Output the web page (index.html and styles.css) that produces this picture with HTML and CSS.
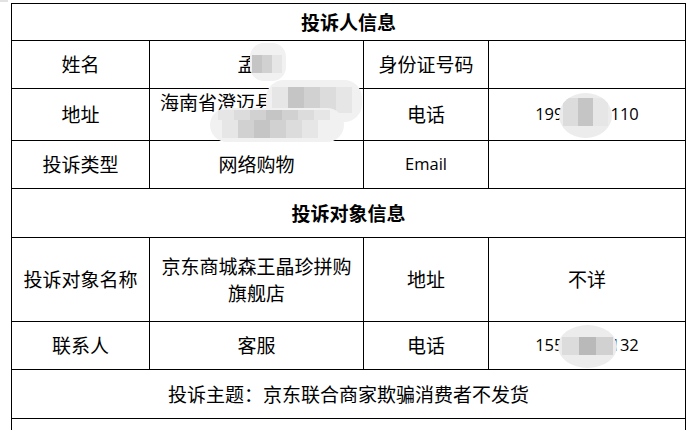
FILE: index.html
```html
<!DOCTYPE html>
<html lang="zh-CN">
<head>
<meta charset="utf-8">
<title>投诉信息</title>
<link rel="stylesheet" href="styles.css">
</head>
<body>
<div class="sheet">
  <table class="form">
    <colgroup>
      <col class="c1"><col class="c2"><col class="c3"><col class="c4">
    </colgroup>
    <tr class="r-title"><th colspan="4">投诉人信息</th></tr>
    <tr class="r48"><td>姓名</td><td>孟<span class="gap-char"></span></td><td>身份证号码</td><td></td></tr>
    <tr class="r-addr"><td>地址</td><td class="addr">海南省澄迈县</td><td>电话</td><td class="num">199<span class="gap"></span>110</td></tr>
    <tr class="r48"><td>投诉类型</td><td>网络购物</td><td class="latin">Email</td><td></td></tr>
    <tr class="r-title2"><th colspan="4">投诉对象信息</th></tr>
    <tr class="r-obj"><td>投诉对象名称</td><td class="two">京东商城森王晶珍拼购旗舰店</td><td>地址</td><td>不详</td></tr>
    <tr class="r48"><td>联系人</td><td>客服</td><td>电话</td><td class="num">155<span class="gap"></span>132</td></tr>
    <tr class="r-theme"><td colspan="4" class="theme">投诉主题：京东联合商家欺骗消费者不发货</td></tr>
    <tr class="r-last"><td colspan="4"></td></tr>
  </table>

  <div class="mosaic m-name">
    <div class="tiles"><i class="t2"></i><i class="t3"></i><i class="t5"></i></div>
  </div>
  <div class="mosaic m-addr-top">
    <div class="row row-a"><i class="t5"></i><i class="t2"></i><i class="t3"></i><i class="t4"></i><i class="t5"></i></div>
  </div>
  <div class="mosaic m-addr-low">
    <div class="row row-b"><i class="t5"></i><i class="t4"></i><i class="t3"></i><i class="t2"></i><i class="t3"></i><i class="t4"></i><i class="t5"></i></div>
    <div class="row row-c"><i class="t5"></i><i class="t3"></i><i class="t2"></i><i class="t3"></i><i class="t4"></i><i class="t5"></i></div>
  </div>
  <div class="mosaic m-tel1">
    <div class="tiles"><i class="t4"></i><i class="t2"></i><i class="t5"></i></div>
  </div>
  <div class="mosaic m-tel2">
    <div class="tiles"><i class="t4"></i><i class="t1"></i><i class="t3"></i></div>
  </div>
  <div class="corner"></div>
</div>
</body>
</html>
```

FILE: styles.css
```css
html, body {
  margin: 0;
  padding: 0;
  background: #ffffff;
}

.sheet {
  position: relative;
  width: 700px;
  height: 430px;
  overflow: hidden;
  padding: 3px 0 0 11px;
  box-sizing: border-box;
}

.form {
  border-collapse: collapse;
  table-layout: fixed;
  width: 674px;
  font-family: "Noto Sans CJK SC", "Microsoft YaHei", sans-serif;
  font-size: 19px;
  color: #000;
}

.form .c1 { width: 138px; }
.form .c2 { width: 214px; }
.form .c3 { width: 125px; }
.form .c4 { width: 197px; }

.form th,
.form td {
  border: 1px solid #000;
  padding: 0 8px 2px;
  text-align: center;
  vertical-align: middle;
  line-height: 27px;
  font-weight: normal;
}

.form th {
  font-weight: bold;
}

.r-title { height: 37px; }
.r48 { height: 48px; }
.r-addr { height: 52px; }
.r-title2 { height: 49px; }
.r-obj { height: 84px; }
.r-theme { height: 49px; }
.r-last { height: 40px; }

.gap-char {
  display: inline-block;
  width: 1em;
}

.form td.addr {
  text-align: left;
  vertical-align: top;
  padding: 0 0 0 10px;
  line-height: 25px;
}

.form td.num,
.form td.latin {
  font-family: "Open Sans", "Noto Sans", sans-serif;
  font-size: 16.5px;
}

.gap {
  display: inline-block;
  width: 47px;
}

/* blurred privacy masks laid over the table */
.mosaic {
  position: absolute;
  background: #f1f1f1;
  filter: blur(0.6px);
  overflow: hidden;
}

.mosaic i {
  display: block;
  height: 100%;
}

.t1 { background: #b9b9b9; }
.t2 { background: #c6c5c5; }
.t3 { background: #d1d1d2; }
.t4 { background: #dcdcdc; }
.t5 { background: #e6e6e7; }

.row {
  display: flex;
  height: 15px;
}
.row i { width: 16px; }

.m-name {
  left: 250px;
  top: 43px;
  width: 36px;
  height: 38px;
  border-radius: 14px;
}
.m-name .tiles {
  display: flex;
  margin: 12px 0 0 2px;
  height: 18px;
}
.m-name .tiles i { width: 10px; }

.m-addr-top {
  left: 266px;
  top: 80px;
  width: 96px;
  height: 42px;
  border-radius: 18px;
}
.row-a { margin: 7px 0 0 6px; height: 26px; }

.m-addr-low {
  left: 210px;
  top: 108px;
  width: 134px;
  height: 34px;
  border-radius: 18px;
}
.row-b { margin: 2px 0 0 8px; height: 10px; }
.row-c { margin: 0 0 0 12px; height: 18px; }

.m-tel1 {
  left: 559px;
  top: 93px;
  width: 53px;
  height: 45px;
  border-radius: 50%;
  background: #ececec;
}
.m-tel1 .tiles {
  display: flex;
  margin: 5px 0 0 4px;
  height: 28px;
}
.m-tel1 .tiles i { width: 15px; }

.m-tel2 {
  left: 558px;
  top: 325px;
  width: 59px;
  height: 43px;
  border-radius: 50%;
  background: #ececec;
}
.m-tel2 .tiles {
  display: flex;
  margin: 12px 0 0 4px;
  height: 18px;
}
.m-tel2 .tiles i { width: 17px; }

.corner {
  position: absolute;
  left: 0;
  top: 0;
  width: 8px;
  height: 2px;
  background: #e2e2e2;
}
```
